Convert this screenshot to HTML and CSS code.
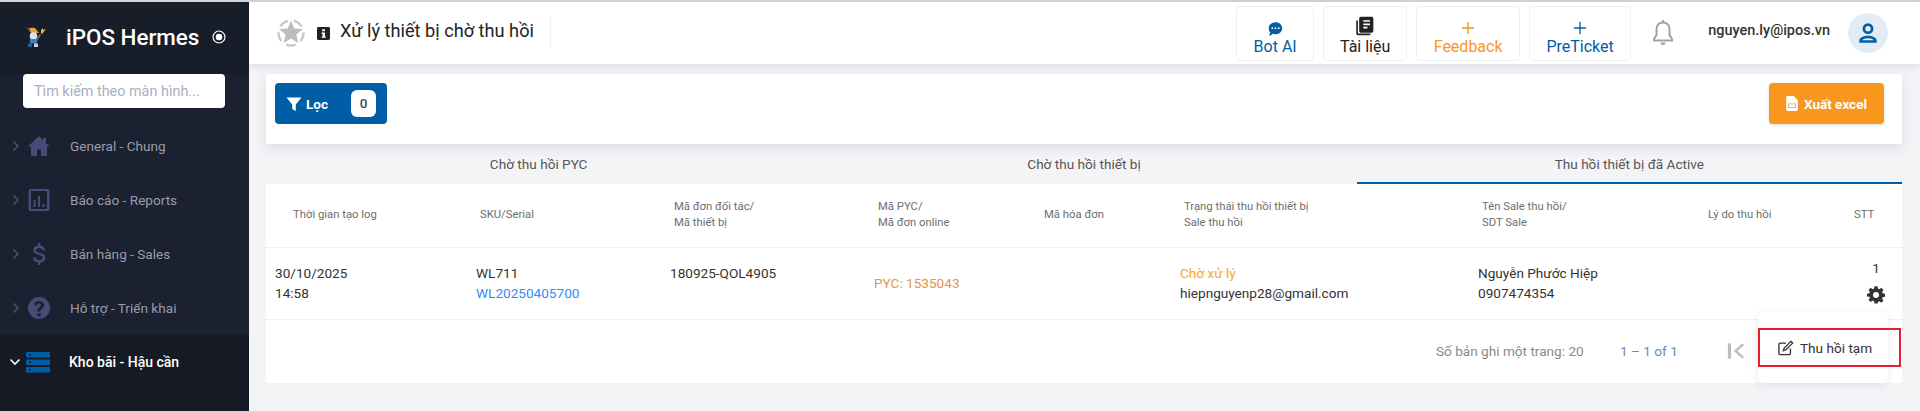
FILE: index.html
```html
<!DOCTYPE html>
<html lang="en">
<head>
    <meta charset="UTF-8">
    <meta name="viewport" content="width=device-width, initial-scale=1.0">
    <title>Xử lý thiết bị chờ thu hồi</title>
    <link rel="stylesheet" href="styles.css">
</head>
<body>
    <div class="app">
        <aside class="sidebar">
            <div class="brand">
                <svg class="brand-logo" viewBox="0 0 22 24">
                    <path d="M0 2l6 1 3-2 3 3 2 4-9-1-2-3z" fill="#3a3f4c"/>
                    <path d="M5 3l6 0 4 5-8 0z" fill="#e8a33c"/>
                    <path d="M17 5l2-2 0 2 3-1-4 5-1-1z" fill="#e2bd3a"/>
                    <circle cx="9.500" cy="11" r="3.800" fill="#d7e3f0"/>
                    <rect x="6" y="14" width="7" height="4.500" fill="#3d7fc0"/>
                    <path d="M12 14l4-5 1 1-4 6z" fill="#6d6f76"/>
                    <rect x="4" y="18.500" width="4" height="3.500" fill="#2a5c9c"/>
                    <rect x="10" y="18.500" width="4" height="3.500" fill="#c9d2dc"/>
                </svg>
                <span class="brand-name">iPOS Hermes</span>
                <svg class="brand-pin" viewBox="0 0 16 16">
                    <circle cx="8" cy="8" r="6.800" fill="none" stroke="#fff" stroke-width="1.300"/>
                    <circle cx="8" cy="8" r="3.800" fill="#fff"/>
                </svg>
            </div>
            <input class="search" type="text" placeholder="Tìm kiếm theo màn hình...">
            <nav class="menu">
                <a class="menu-item">
                    <svg class="chevron" viewBox="0 0 8 12"><path d="M1.500 1.500L6 6l-4.500 4.500" fill="none" stroke="currentColor" stroke-width="1.400"/></svg>
                    <svg class="menu-icon" viewBox="0 0 24 24"><path d="M12 2L1 12.500h3V22h6v-6.500h4V22h6v-9.500h3L19 9.200V4h-3v2.300z"/></svg>
                    <span>General - Chung</span>
                </a>
                <a class="menu-item">
                    <svg class="chevron" viewBox="0 0 8 12"><path d="M1.500 1.500L6 6l-4.500 4.500" fill="none" stroke="currentColor" stroke-width="1.400"/></svg>
                    <svg class="menu-icon" viewBox="0 0 24 24"><path fill-rule="evenodd" d="M4 1h16a2.500 2.500 0 0 1 2.500 2.500v17A2.500 2.500 0 0 1 20 23H4a2.500 2.500 0 0 1-2.500-2.500v-17A2.500 2.500 0 0 1 4 1zm0 2v18h16V3zm2.500 9h2v7h-2zm4.500-4h2v11h-2zm4.500 8h2v3h-2z"/></svg>
                    <span>Báo cáo - Reports</span>
                </a>
                <a class="menu-item">
                    <svg class="chevron" viewBox="0 0 8 12"><path d="M1.500 1.500L6 6l-4.500 4.500" fill="none" stroke="currentColor" stroke-width="1.400"/></svg>
                    <svg class="menu-icon" viewBox="0 0 24 24"><path d="M11 1h2.400v2.600c2.600.4 4.400 2 4.800 4.600h-2.800c-.3-1.400-1.500-2.300-3.200-2.300-1.900 0-3.200 1-3.200 2.400 0 1.300 1 2 3.600 2.700 3.400.8 5.800 2 5.800 5 0 2.600-2 4.200-5 4.600V23H11v-2.400c-2.900-.4-5-2.200-5.300-5h2.800c.3 1.500 1.600 2.600 3.700 2.600 2.200 0 3.500-1 3.500-2.400 0-1.400-1-2.100-3.800-2.800-3.200-.8-5.600-2-5.600-4.900 0-2.400 1.900-4.100 4.700-4.500z"/></svg>
                    <span>Bán hàng - Sales</span>
                </a>
                <a class="menu-item">
                    <svg class="chevron" viewBox="0 0 8 12"><path d="M1.500 1.500L6 6l-4.500 4.500" fill="none" stroke="currentColor" stroke-width="1.400"/></svg>
                    <svg class="menu-icon" viewBox="0 0 24 24"><path fill-rule="evenodd" d="M12 1a11 11 0 1 1 0 22 11 11 0 0 1 0-22zm-1.600 16.200v3h3.200v-3zM12 5c-2.900 0-4.700 1.600-4.900 4.200h2.900c.1-1.100.9-1.700 2-1.700s1.900.6 1.900 1.600c0 .8-.4 1.300-1.400 2-1.500 1-2.200 1.900-2.100 3.700v.8h2.900V15c0-.9.300-1.300 1.400-2.100 1.400-.9 2.400-2 2.400-3.900C16.700 6.500 14.800 5 12 5z"/></svg>
                    <span>Hỗ trợ - Triển khai</span>
                </a>
                <a class="menu-item active">
                    <svg class="chevron" viewBox="0 0 12 8"><path d="M1.500 1.500L6 6l4.500-4.500" fill="none" stroke="currentColor" stroke-width="1.600"/></svg>
                    <svg class="menu-icon" viewBox="0 0 24 24"><path fill-rule="evenodd" d="M0 2h24v5.500H0zm3 2v1.500h2V4zM0 9.500h24V15H0zm3 2V13h2v-1.500zM0 17h24v5.500H0zm3 2v1.500h2V19z"/></svg>
                    <span>Kho bãi - Hậu cần</span>
                </a>
            </nav>
        </aside>

        <div class="content">
            <header class="topbar">
                <svg class="star-logo" viewBox="0 0 28 28">
                    <path d="M14 1.500l3.300 8 8.600.6-6.600 5.600 2.050 8.400L14 19.600l-7.350 4.510 2.050-8.400-6.600-5.600 8.600-.6z" fill="#bdbdbd"/>
                    <path d="M17 1.900A12.500 12.500 0 0 1 24.600 7.400M26.500 13.100A12.500 12.500 0 0 1 23.600 22M18.700 25.600A12.500 12.500 0 0 1 9.300 25.600M4.400 22A12.500 12.500 0 0 1 1.500 13.100M3.400 7.400A12.500 12.500 0 0 1 11 1.900" fill="none" stroke="#c8c8c8" stroke-width="2.400"/>
                </svg>
                <svg class="info-icon" viewBox="0 0 14 14">
                    <rect width="14" height="14" rx="1.500" fill="#222"/>
                    <path d="M5.500 2.500h3v2.200h-3zM5 6h3.500v4.200h1v1.500H5v-1.500h1V7.500H5z" fill="#fff"/>
                </svg>
                <h1 class="page-title">Xử lý thiết bị chờ thu hồi</h1>
                <div class="topbar-actions">
                    <a class="top-btn blue bot">
                        <svg viewBox="0 0 24 24"><path fill-rule="evenodd" d="M12 3c5.500 0 9.500 3.800 9.500 8.500S17.500 20 12 20c-1.200 0-2.300-.2-3.300-.5C7 21 5 22 2.500 22c1.300-1.300 2-2.700 2.200-4.300C3.200 16.200 2.500 14 2.500 11.500 2.500 6.800 6.500 3 12 3zM7.500 10.200a1.300 1.300 0 1 0 0 2.600 1.300 1.300 0 0 0 0-2.600zm4.500 0a1.300 1.300 0 1 0 0 2.600 1.300 1.300 0 0 0 0-2.600zm4.500 0a1.300 1.300 0 1 0 0 2.600 1.300 1.300 0 0 0 0-2.600z" fill="#005ea6"/></svg>
                        <span>Bot AI</span>
                    </a>
                    <a class="top-btn docs">
                        <svg viewBox="0 0 24 24"><path fill-rule="evenodd" d="M7 1h13a2 2 0 0 1 2 2v15a2 2 0 0 1-2 2H7a2 2 0 0 1-2-2V3a2 2 0 0 1 2-2zm3 4v2h8V5zm0 4v2h8V9zm0 4v2h5v-2zM1.500 5.500h2V21h15v2h-15a2 2 0 0 1-2-2z" fill="#222"/></svg>
                        <span>Tài liệu</span>
                    </a>
                    <a class="top-btn orange feedback">
                        <svg viewBox="0 0 24 24"><path d="M11 3h2v8h8v2h-8v8h-2v-8H3v-2h8z" fill="#f8971d"/></svg>
                        <span>Feedback</span>
                    </a>
                    <a class="top-btn blue ticket">
                        <svg viewBox="0 0 24 24"><path d="M11 3h2v8h8v2h-8v8h-2v-8H3v-2h8z" fill="#005ea6"/></svg>
                        <span>PreTicket</span>
                    </a>
                </div>
                <svg class="bell" viewBox="0 0 24 28"><path d="M12 3.500c-4.200 0-6.500 3-6.500 7v5.500L3 20v1.500h18V20l-2.500-4v-5.500c0-4-2.300-7-6.500-7z" fill="none" stroke="#a3a3a3" stroke-width="2"/><path d="M9.500 23.500h5a2.500 2.500 0 0 1-5 0zM11 1h2v2.500h-2z" fill="#a3a3a3"/></svg>
                <span class="user-email">nguyen.ly@ipos.vn</span>
                <div class="avatar">
                    <svg viewBox="0 0 24 24"><path fill-rule="evenodd" d="M12 3a5 5 0 1 1 0 10 5 5 0 0 1 0-10zm0 2.500a2.500 2.500 0 1 0 0 5 2.500 2.500 0 0 0 0-5zM12 14.500c4 0 8 1.800 8 4.300V21H4v-2.200c0-2.500 4-4.300 8-4.300zm0 2.300c-2.600 0-4.800.9-5.300 1.900h10.600c-.5-1-2.700-1.900-5.300-1.900z" fill="#005ea6"/></svg>
                </div>
            </header>

            <main class="main">
                <section class="filter-card">
                    <button class="filter-btn">
                        <svg viewBox="0 0 16 16"><path d="M.5 1.500h15L9.800 8.500V15L6.200 13V8.500z" fill="#fff"/></svg>
                        <span>Lọc</span>
                        <b class="filter-count">0</b>
                    </button>
                    <button class="export-btn">
                        <svg viewBox="0 0 14 18"><path fill-rule="evenodd" d="M1.500 0H9l5 5v11.500a1.500 1.500 0 0 1-1.500 1.500h-11A1.500 1.500 0 0 1 0 16.500v-15A1.500 1.500 0 0 1 1.500 0zM2.500 9v5.500h9V9zm1 1h7v3.500h-7z" fill="#fff"/></svg>
                        <span>Xuất excel</span>
                    </button>
                </section>

                <div class="tabs">
                    <div class="tab">Chờ thu hồi PYC</div>
                    <div class="tab">Chờ thu hồi thiết bị</div>
                    <div class="tab active">Thu hồi thiết bị đã Active</div>
                </div>

                <section class="table-card">
                    <table class="data-table">
                        <colgroup>
                            <col class="col-1"><col class="col-2"><col class="col-3"><col class="col-4"><col class="col-5"><col class="col-6"><col class="col-7"><col class="col-8"><col class="col-9">
                        </colgroup>
                        <thead>
                            <tr>
                                <th class="first">Thời gian tạo log</th>
                                <th>SKU/Serial</th>
                                <th>Mã đơn đối tác/<br>Mã thiết bị</th>
                                <th>Mã PYC/<br>Mã đơn online</th>
                                <th>Mã hóa đơn</th>
                                <th>Trạng thái thu hồi thiết bị<br>Sale thu hồi</th>
                                <th>Tên Sale thu hồi/<br>SDT Sale</th>
                                <th>Lý do thu hồi</th>
                                <th>STT</th>
                            </tr>
                        </thead>
                        <tbody>
                            <tr>
                                <td>30/10/2025<br>14:58</td>
                                <td>WL711<br><a class="link">WL20250405700</a></td>
                                <td class="top-line">180925-QOL4905</td>
                                <td class="pyc">PYC: 1535043</td>
                                <td></td>
                                <td><span class="pending">Chờ xử lý</span><br>hiepnguyenp28@gmail.com</td>
                                <td>Nguyễn Phước Hiệp<br>0907474354</td>
                                <td></td>
                                <td class="stt">
                                    <div>1</div>
                                    <svg class="gear" viewBox="0 0 24 24"><path fill-rule="evenodd" d="M10 1h4l.6 3.100 1.900.8L19.100 3 22 5.900l-1.900 2.600.8 1.900L24 11v4l-3.100.6-.8 1.900 1.900 2.600-2.900 2.900-2.600-1.900-1.900.8L14 24h-4l-.6-3.100-1.900-.8L4.900 22 2 19.100l1.900-2.600-.8-1.900L0 15v-4l3.100-.6.800-1.900L2 5.900 4.900 3l2.600 1.900 1.900-.8zM12 8.500a4 4 0 1 0 0 8 4 4 0 0 0 0-8z" transform="translate(1.200 .6) scale(.9)" fill="#333"/></svg>
                                </td>
                            </tr>
                        </tbody>
                    </table>
                    <div class="pager">
                        <span class="pager-size">Số bản ghi một trang: 20</span>
                        <span class="pager-range">1 – 1 of 1</span>
                        <svg class="pager-first" viewBox="0 0 20 20"><path d="M1 1.500h3.500v17H1z" fill="#bdbdbd"/><path d="M18 2.500L9.500 10l8.500 7.500" fill="none" stroke="#bdbdbd" stroke-width="2.600"/></svg>
                    </div>
                </section>

                <div class="row-menu">
                    <div class="row-menu-item">
                        <svg viewBox="0 0 18 18"><path d="M14 9.500V15a1.500 1.500 0 0 1-1.500 1.500h-10A1.500 1.500 0 0 1 1 15V5a1.500 1.500 0 0 1 1.500-1.500H9" fill="none" stroke="#333" stroke-width="1.500"/><path d="M14.500 1.500l2 2L9 11l-3 1 1-3z" fill="none" stroke="#333" stroke-width="1.500"/></svg>
                        <span>Thu hồi tạm</span>
                    </div>
                </div>
            </main>
        </div>
    </div>
</body>
</html>
```

FILE: styles.css
```css
* {
    box-sizing: border-box;
}

html, body {
    height: 100%;
}

body {
    margin: 0;
    overflow: hidden;
    font-family: 'Roboto', 'Liberation Sans', sans-serif;
    font-size: 13.6px;
    color: #333;
    background-color: #f4f4f7;
}

.app {
    display: flex;
    height: 100%;
    border-top: 2px solid #d4d4d4;
}

/* sidebar */
.sidebar {
    width: 249px;
    flex-shrink: 0;
    background-color: #1b2130;
    display: flex;
    flex-direction: column;
}

.brand {
    height: 72px;
    flex-shrink: 0;
    display: flex;
    align-items: center;
    background-color: #171d29;
    padding: 0 0 2px 24px;
}

.brand-logo {
    width: 22px;
    height: 24px;
}

.brand-name {
    margin-left: 20px;
    font-size: 22.4px;
    font-weight: 500;
    color: #fff;
}

.brand-pin {
    width: 14px;
    height: 14px;
    margin-left: 13px;
}

.search {
    width: 202px;
    height: 34px;
    margin: 0 0 11px 23px;
    border: 0;
    border-radius: 4px;
    padding: 0 11px;
    font-family: inherit;
    font-size: 14.4px;
    background-color: #fff;
    outline: 0;
}

.search::placeholder {
    color: #a9afbd;
}

.menu {
    flex: 1;
    display: flex;
    flex-direction: column;
}

.menu-item {
    height: 54px;
    display: flex;
    align-items: center;
    padding-left: 12px;
    color: #9a9da8;
    flex-shrink: 0;
}

.menu-item .chevron {
    width: 8px;
    height: 12px;
    color: #505670;
    margin: 0 7px 0 0;
    flex-shrink: 0;
}

.menu-item .menu-icon {
    width: 24px;
    height: 24px;
    fill: #474b75;
    margin-right: 19px;
}

.menu-item.active {
    height: 76px;
    padding-bottom: 22px;
    background-color: #151a25;
    color: #fff;
    font-size: 14px;
    font-weight: 500;
}

.menu-item.active .chevron {
    width: 12px;
    height: 8px;
    color: #fff;
    margin: 0 5px 0 -3px;
}

.menu-item.active .menu-icon {
    fill: #005ea6;
}

/* top bar */
.content {
    flex: 1;
    min-width: 0;
    display: flex;
    flex-direction: column;
}

.topbar {
    height: 62px;
    flex-shrink: 0;
    display: flex;
    align-items: center;
    padding-left: 28px;
    background-color: #fff;
    box-shadow: 0 2px 8px rgba(40, 40, 80, 0.12);
    position: relative;
    z-index: 1;
}

.star-logo {
    width: 28px;
    height: 28px;
}

.info-icon {
    width: 13px;
    height: 13px;
    margin-left: 12px;
}

.page-title {
    margin: 0 0 2px 10px;
    padding-right: 16px;
    height: 32px;
    line-height: 30px;
    font-size: 18.2px;
    font-weight: 400;
    color: #222;
    border-right: 1px solid #eee;
}

.topbar-actions {
    margin-left: auto;
    display: flex;
    gap: 9px;
}

.top-btn {
    height: 55px;
    display: flex;
    flex-direction: column;
    align-items: center;
    justify-content: flex-end;
    padding-bottom: 4px;
    border: 1px solid #f0f0f0;
    border-radius: 4px;
    font-size: 16px;
    line-height: 19px;
    color: #222;
}

.top-btn svg {
    width: 16px;
    height: 16px;
    margin-bottom: 1px;
}

.top-btn.bot { width: 78px; }
.top-btn.docs { width: 84px; }
.top-btn.feedback { width: 104px; }
.top-btn.ticket { width: 102px; }
.top-btn.bot svg { width: 17px; height: 17px; margin-bottom: 0; }
.top-btn.docs svg { width: 20px; height: 20px; }
.top-btn.blue { color: #005ea6; }
.top-btn.orange { color: #f8971d; }

.bell {
    width: 24px;
    height: 28px;
    margin-left: 20px;
}

.user-email {
    margin: 0 18px 5px 33px;
    font-size: 14.5px;
    font-weight: 500;
    color: #333;
}

.avatar {
    width: 40px;
    height: 40px;
    margin-right: 32px;
    border-radius: 50%;
    background-color: #e3ecf5;
    display: flex;
    align-items: center;
    justify-content: center;
}

.avatar svg {
    width: 26px;
    height: 26px;
}

/* main area */
.main {
    flex: 1;
    position: relative;
    padding: 10px 18px 0 17px;
}

.filter-card {
    height: 70px;
    display: flex;
    justify-content: space-between;
    align-items: flex-start;
    padding: 9px 18px 0 9px;
    background-color: #fff;
    border-radius: 3px;
    box-shadow: 0 4px 12px rgba(40, 40, 80, 0.12);
}

.filter-btn, .export-btn {
    height: 41px;
    display: flex;
    align-items: center;
    border: 0;
    border-radius: 4px;
    font-family: inherit;
    font-size: 13.5px;
    font-weight: 700;
    color: #fff;
}

.filter-btn {
    width: 112px;
    padding: 0 11px;
    background-color: #005ea6;
}

.filter-btn svg {
    width: 16px;
    height: 16px;
    margin-right: 4px;
}

.filter-count {
    margin-left: auto;
    width: 25px;
    height: 27px;
    line-height: 27px;
    border-radius: 6px;
    background-color: #fff;
    color: #444;
    font-weight: 500;
}

.export-btn {
    width: 115px;
    justify-content: center;
    background-color: #f8971d;
    box-shadow: 0 1px 3px rgba(0, 0, 0, 0.15);
}

.export-btn svg {
    width: 12px;
    height: 15px;
    margin-right: 6px;
}

.tabs {
    display: flex;
    height: 40px;
}

.tab {
    flex: 1;
    display: flex;
    align-items: center;
    justify-content: center;
    color: #555;
}

.tab.active {
    border-bottom: 2px solid #005ea6;
    padding-top: 2px;
}

.table-card {
    height: 199px;
    background-color: #fff;
}

.data-table {
    width: 100%;
    border-collapse: collapse;
    table-layout: fixed;
}

.col-1 { width: 201px; }
.col-2 { width: 194px; }
.col-3 { width: 204px; }
.col-4 { width: 166px; }
.col-5 { width: 140px; }
.col-6 { width: 298px; }
.col-7 { width: 226px; }
.col-8 { width: 146px; }
.col-9 { width: 61px; }

.data-table th {
    height: 63px;
    padding: 0 0 0 13px;
    font-size: 11.3px;
    line-height: 16px;
    font-weight: 400;
    text-align: left;
    color: #6e6e6e;
    border-bottom: 1px solid #f0f0f0;
}

.data-table th.first {
    padding-left: 27px;
}

.data-table td {
    height: 72px;
    padding: 0 0 0 9px;
    line-height: 20px;
    color: #333;
    border-bottom: 1px solid #f0f0f0;
}

.data-table td.top-line {
    padding-bottom: 20px;
}

.data-table td.stt {
    vertical-align: top;
    padding-top: 10px;
    text-align: center;
}

.data-table td.pyc {
    color: #e2964a;
}

.gear {
    display: block;
    width: 20px;
    height: 20px;
    margin: 7px auto 0;
}

.link {
    color: #2f8cff;
}

.pending {
    color: #f9a825;
}

.pager {
    height: 63px;
    display: flex;
    align-items: center;
    padding-left: 1170px;
    color: #8a8a8a;
}

.pager-size {
    width: 184px;
}

.pager-range {
    width: 107px;
    color: #6c8bb0;
}

.pager-first {
    width: 18px;
    height: 18px;
}

/* row actions popup */
.row-menu {
    position: absolute;
    left: 1509px;
    top: 247px;
    width: 130px;
    height: 72px;
    background-color: #fff;
    border-radius: 6px;
    box-shadow: 0 2px 8px rgba(40, 40, 80, 0.1);
}

.row-menu-item {
    position: absolute;
    left: 0;
    top: 17px;
    width: 143px;
    height: 39px;
    display: flex;
    align-items: center;
    padding-left: 18px;
    border: 2px solid #e81c2c;
    color: #333;
}

.row-menu-item svg {
    width: 16px;
    height: 16px;
    margin-right: 6px;
}
```
